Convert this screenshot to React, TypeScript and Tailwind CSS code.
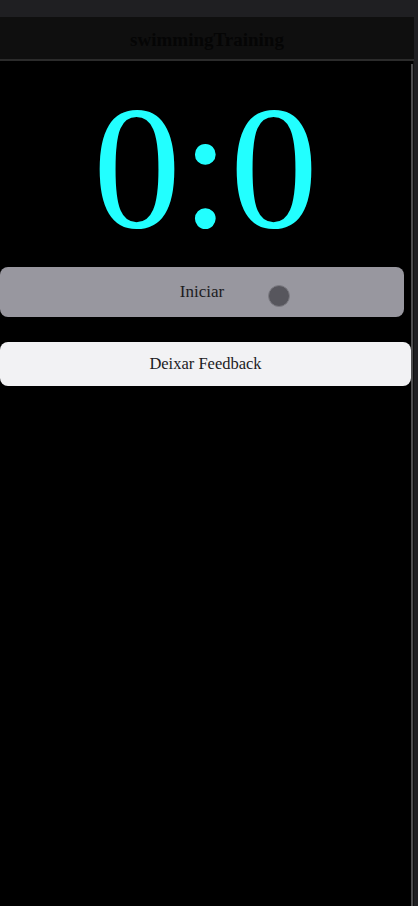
export default function App() {
  return (
    <div className="h-[906px] w-[418px] bg-[#1f1f22] flex flex-col overflow-hidden font-['Liberation_Serif',serif]">
      <div className="h-[17px] shrink-0" />
      <div className="flex flex-1 min-h-0">
        <div className="w-[414px] flex flex-col">
          <header className="h-[44px] shrink-0 bg-[#0f0f0f] border-b-2 border-[#2b2b2b] flex items-center justify-center pt-[4px]">
            <h1 className="text-[19px] font-bold text-[#050505]">swimmingTraining</h1>
          </header>
          <main className="flex-1 bg-black flex">
            <div className="flex-1 flex flex-col">
              <div className="mt-[19px] text-center text-[176px] leading-none text-[#22ffff]">0:0</div>
              <button className="mt-[11px] h-[50px] w-[404px] rounded-lg bg-[#98979f] text-[17px] text-[#1c1c1e] relative">
                Iniciar
                <span className="absolute left-[268px] top-[18px] w-[22px] h-[22px] rounded-full bg-[#57565d] border border-[#7c7b82]" />
              </button>
              <button className="mt-[25px] h-[44px] w-[411px] rounded-lg bg-[#f2f2f4] text-[16.5px] text-[#1c1c1e] relative z-10">
                Deixar Feedback
              </button>
            </div>
            <div className="w-[7px] flex">
              <div className="mt-[3px] w-[2px] bg-[#4d4d4f]" />
              <div className="flex-1 bg-[#111]" />
            </div>
          </main>
        </div>
        <div className="w-[4px] bg-[#1f1f22]" />
      </div>
    </div>
  );
}
